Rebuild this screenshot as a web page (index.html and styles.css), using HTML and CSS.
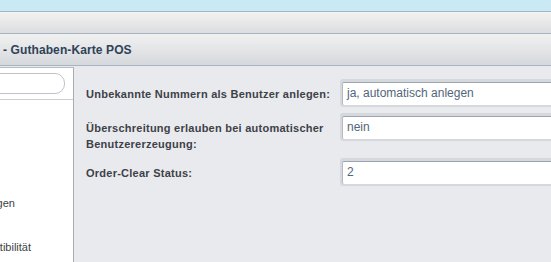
FILE: index.html
```html
<!DOCTYPE html>
<html lang="de">
<head>
<meta charset="utf-8">
<title>Guthaben-Karte POS</title>
<link rel="stylesheet" href="styles.css">
</head>
<body>
<div class="topbar"></div>
<div class="toolbar"></div>
<div class="titlebar"><span class="title">- Guthaben-Karte POS</span></div>
<div class="main">
  <aside class="sidebar">
    <div class="search"><input class="search-input" type="text"></div>
    <ul class="nav">
      <li class="nav-item"></li>
      <li class="nav-item"></li>
      <li class="nav-item nav-item--sub">Anzeigen</li>
      <li class="nav-item">Kompatibilität</li>
    </ul>
  </aside>
  <section class="content">
    <div class="form">
      <div class="label">Unbekannte Nummern als Benutzer anlegen:</div>
      <div class="field"><div class="input">ja, automatisch anlegen</div></div>
      <div class="label">Überschreitung erlauben bei automatischer Benutzererzeugung:</div>
      <div class="field"><div class="input">nein</div></div>
      <div class="label">Order-Clear Status:</div>
      <div class="field"><div class="input">2</div></div>
    </div>
  </section>
</div>
</body>
</html>
```
FILE: styles.css
```css
* { box-sizing: border-box; }
html, body { margin: 0; padding: 0; }
body {
  width: 551px;
  height: 262px;
  overflow: hidden;
  background: #e9eaed;
  font-family: "Liberation Sans", Arial, sans-serif;
}
.topbar {
  height: 12px;
  background: #c9e9f5;
  border-bottom: 1px solid #a7b4c1;
}
.toolbar {
  height: 22px;
  background: linear-gradient(#f2f2f2, #dcdddf);
  border-bottom: 1px solid #a7b4c1;
}
.titlebar {
  height: 32px;
  background: linear-gradient(#f1f1f1, #d5d8dc);
  border-bottom: 1px solid #a9b3bd;
  display: flex;
  align-items: center;
  padding-left: 3px;
}
.title {
  font-size: 12px;
  font-weight: bold;
  color: #2f4258;
  letter-spacing: 0.1px;
}
.main {
  display: flex;
  height: 196px;
  padding-top: 1px;
}
.sidebar {
  width: 74px;
  flex: none;
  background: #fff;
  border-top: 1px solid #b4bcc4;
  border-right: 1px solid #a6adb5;
  overflow: hidden;
}
.search {
  padding: 5px 0 5px 0;
  border-bottom: 1px solid #c9ced3;
}
.search-input {
  display: block;
  margin-left: -30px;
  width: 95px;
  height: 21px;
  border: 1px solid #bcc3ca;
  border-radius: 10px;
  background: #fff;
  outline: none;
}
.nav {
  list-style: none;
  margin: 0 0 0 -35px;
  padding: 0;
}
.nav-item {
  height: 44px;
  padding-top: 5px;
  line-height: 20px;
  font-size: 11px;
  color: #3c3f44;
  white-space: nowrap;
}
.nav-item--sub {
  padding-left: 4px;
}
.content {
  flex: 1;
  padding: 12px 0 0 12px;
  overflow: hidden;
}
.form {
  display: grid;
  grid-template-columns: 254px 320px;
  row-gap: 6px;
}
.label {
  padding-top: 7px;
  font-size: 11px;
  line-height: 16px;
  font-weight: bold;
  color: #3d4148;
  letter-spacing: 0.25px;
}
.field {
  align-self: start;
  background: #d5d9de;
  border-radius: 3px;
  padding: 3px 0 2px 2px;
}
.input {
  height: 23px;
  background: #fff;
  border-top: 1px solid #9ba5af;
  border-left: 1px solid #b3bbc3;
  border-radius: 2px 0 0 2px;
  padding-left: 4px;
  font-size: 12px;
  line-height: 21px;
  color: #52667a;
}
```
